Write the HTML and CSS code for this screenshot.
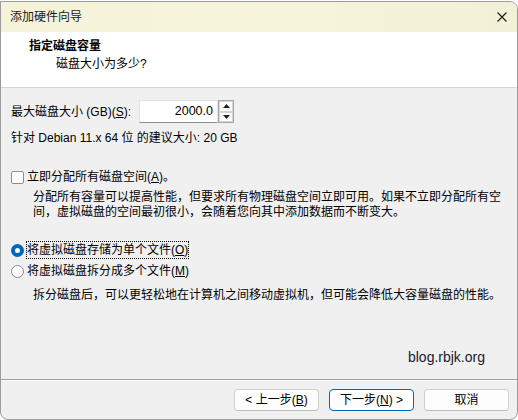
FILE: index.html
```html
<!DOCTYPE html>
<html lang="zh-CN">
<head>
<meta charset="utf-8">
<title>添加硬件向导</title>
<link rel="stylesheet" href="styles.css">
</head>
<body>
<div class="window">
  <div class="titlebar">
    <span class="title">添加硬件向导</span>
    <svg class="close" width="10" height="10" viewBox="0 0 10 10"><path d="M0.5 0.5L9.5 9.5M9.5 0.5L0.5 9.5" stroke="#1a1a1a" stroke-width="1.1" fill="none"/></svg>
  </div>
  <div class="header">
    <div class="h-title">指定磁盘容量</div>
    <div class="h-sub">磁盘大小为多少?</div>
  </div>
  <div class="content">
    <div class="size-row">
      <label class="lbl">最大磁盘大小 (GB)(<u>S</u>):</label>
      <div class="spin">
        <div class="spin-input">2000.0</div>
        <div class="spin-btns">
          <div class="spin-btn"><svg width="7" height="4" viewBox="0 0 7 4"><path d="M0 4L3.5 0L7 4Z" fill="#222"/></svg></div>
          <div class="spin-btn"><svg width="7" height="4" viewBox="0 0 7 4"><path d="M0 0L3.5 4L7 0Z" fill="#222"/></svg></div>
        </div>
      </div>
    </div>
    <div class="recommend">针对 Debian 11.x 64 位 的建议大小: 20 GB</div>

    <div class="option check-row">
      <span class="checkbox"></span>
      <span>立即分配所有磁盘空间(<u>A</u>)。</span>
    </div>
    <div class="desc">分配所有容量可以提高性能，但要求所有物理磁盘空间立即可用。如果不立即分配所有空间，虚拟磁盘的空间最初很小，会随着您向其中添加数据而不断变大。</div>

    <div class="option radio-row first">
      <span class="radio on"></span>
      <span class="focus">将虚拟磁盘存储为单个文件(<u>O</u>)</span>
    </div>
    <div class="option radio-row second">
      <span class="radio"></span>
      <span>将虚拟磁盘拆分成多个文件(<u>M</u>)</span>
    </div>
    <div class="desc desc2">拆分磁盘后，可以更轻松地在计算机之间移动虚拟机，但可能会降低大容量磁盘的性能。</div>

    <div class="brand">blog.rbjk.org</div>
  </div>
  <div class="footer">
    <button class="btn">&lt; 上一步(<u>B</u>)</button>
    <button class="btn default">下一步(<u>N</u>) &gt;</button>
    <button class="btn">取消</button>
  </div>
</div>
</body>
</html>
```

FILE: styles.css
```css
* { box-sizing: border-box; }
html, body {
  margin: 0;
  padding: 0;
  width: 518px;
  height: 420px;
  background: #ffffff;
  overflow: hidden;
}
body {
  font-family: "Liberation Sans", "Noto Sans CJK SC", sans-serif;
  font-size: 12px;
  color: #000;
}
.window {
  margin-top: 1px;
  width: 518px;
  height: 419px;
  border: 1px solid #9c9c9c;
  border-radius: 0 8px 8px 8px;
  background: #f0f0f0;
  display: flex;
  flex-direction: column;
  overflow: hidden;
}
.titlebar {
  height: 30px;
  flex: none;
  background: linear-gradient(90deg, #f5f3da 0%, #f6f4d9 60%, #f3f1d5 100%);
  display: flex;
  align-items: center;
  justify-content: space-between;
  padding: 0 10px 0 9px;
}
.title {
  font-size: 12px;
  color: #1a1a1a;
  line-height: 16px;
}
.close { display: block; }
.header {
  flex: none;
  height: 56px;
  background: #fff;
  border-bottom: 1px solid #d6d6d6;
  padding: 6px 0 0 28px;
}
.h-title {
  font-weight: bold;
  line-height: 16px;
}
.h-sub {
  line-height: 16px;
  margin-top: 2px;
  padding-left: 27px;
}
.content {
  flex: 1;
  display: flex;
  flex-direction: column;
  padding: 12px 3px 0 10px;
}
.size-row {
  display: flex;
  align-items: center;
  height: 23px;
}
.lbl {
  width: 128px;
  line-height: 16px;
}
.spin {
  display: flex;
  height: 23px;
}
.spin-input {
  width: 79px;
  height: 23px;
  background: #fff;
  border: 1px solid #e3e3e3;
  border-bottom-color: #8c8c8c;
  text-align: right;
  padding-right: 4px;
  line-height: 21px;
  font-size: 12.5px;
}
.spin-btns {
  width: 16px;
  height: 23px;
  border: 1px solid #a8a8a8;
  display: flex;
  flex-direction: column;
  background: #f0f0f0;
}
.spin-btn {
  flex: 1;
  display: flex;
  align-items: center;
  justify-content: center;
  background: #fdfdfd;
  border: 1px solid #d4d4d4;
}
.spin-btn svg { display: block; }
.recommend {
  margin-top: 7px;
  line-height: 16px;
}
.option {
  display: flex;
  align-items: center;
  line-height: 16px;
  gap: 3px;
}
.check-row { margin-top: 23px; }
.checkbox {
  width: 13px;
  height: 13px;
  border: 1px solid #8f8f8f;
  border-radius: 2px;
  background: #fff;
  flex: none;
}
.desc {
  margin-top: 5px;
  padding-left: 22px;
  line-height: 15px;
}
.radio-row.first { margin-top: 22px; }
.radio-row.second { margin-top: 5px; }
.radio {
  width: 13px;
  height: 13px;
  border: 1px solid #8a8a8a;
  border-radius: 50%;
  background: #fff;
  flex: none;
}
.radio.on {
  border: 4px solid #0067c0;
  background: #fff;
}
.focus {
  outline: 1px dotted #000;
  outline-offset: 0;
}
.desc2 { margin-top: 9px; }
.brand {
  margin-top: auto;
  margin-bottom: 14px;
  align-self: flex-end;
  padding-right: 29px;
  font-family: "Liberation Sans", Arial, sans-serif;
  font-size: 14px;
  color: #1a1a2a;
  line-height: 16px;
}
.footer {
  flex: none;
  height: 40px;
  border-top: 1px solid #a0a0a0;
  box-shadow: inset 0 1px 0 #ffffff;
  display: flex;
  justify-content: flex-end;
  gap: 10px;
  padding: 9px 8px 0 0;
}
.btn {
  width: 85px;
  height: 22px;
  font-family: "Liberation Sans", "Noto Sans CJK SC", sans-serif;
  font-size: 12px;
  line-height: 16px;
  color: #000;
  background: #fdfdfd;
  border: 1px solid #d0d0d0;
  border-bottom-color: #bcbcbc;
  border-radius: 4px;
  padding: 0;
}
.btn.default {
  border: 1px solid #0067c0;
}
```
